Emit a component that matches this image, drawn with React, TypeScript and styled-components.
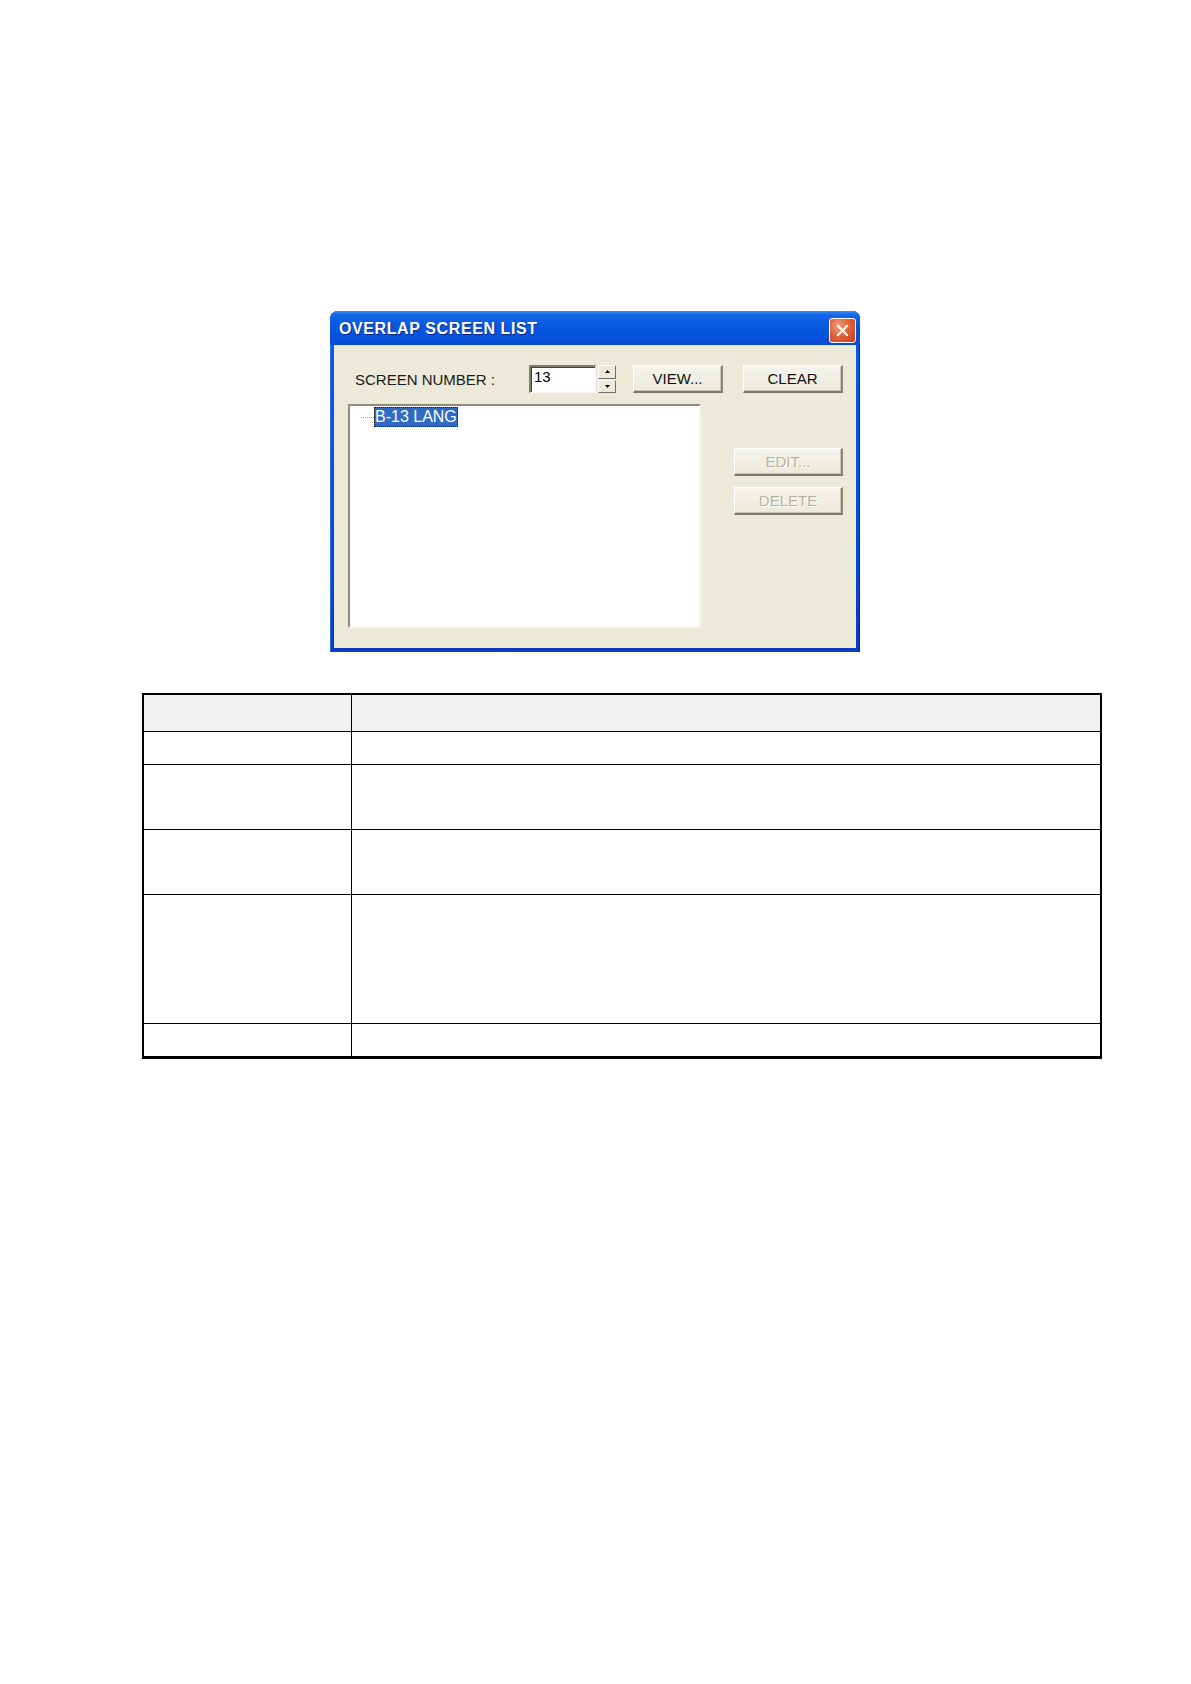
import styled, { createGlobalStyle } from 'styled-components';

const GlobalStyle = createGlobalStyle`
  html, body {
    margin: 0;
    padding: 0;
    background: #ffffff;
  }
  body {
    font-family: 'Liberation Sans', Arial, sans-serif;
    min-height: 1684px;
  }
`;

const rowHeights = [33, 65, 65, 129, 34];

export default function App() {
  return (
    <>
      <GlobalStyle />
      <Page>
        <Window>
          <TitleBar>
            <Title>OVERLAP SCREEN LIST</Title>
            <CloseButton aria-label='close'>
              <svg width='13' height='13' viewBox='0 0 13 13'>
                <path
                  d='M2 2 L11 11 M11 2 L2 11'
                  stroke='#ffffff'
                  strokeWidth='2.2'
                  strokeLinecap='square'
                />
              </svg>
            </CloseButton>
          </TitleBar>
          <Body>
            <TopRow>
              <Label>SCREEN NUMBER :</Label>
              <NumberField>13</NumberField>
              <Spinner>
                <SpinButton>
                  <svg width='5' height='3' viewBox='0 0 5 3'>
                    <path d='M2.5 0 L5 3 L0 3 Z' fill='#000' />
                  </svg>
                </SpinButton>
                <SpinButton>
                  <svg width='5' height='3' viewBox='0 0 5 3'>
                    <path d='M0 0 L5 0 L2.5 3 Z' fill='#000' />
                  </svg>
                </SpinButton>
              </Spinner>
              <Button $width={90} $ml={17}>
                VIEW...
              </Button>
              <Button $width={100} $ml={20}>
                CLEAR
              </Button>
            </TopRow>
            <MainRow>
              <TreeBox>
                <TreeItem>
                  <Branch />
                  <Selected>B-13 LANG</Selected>
                </TreeItem>
              </TreeBox>
              <SideButtons>
                <Button $width={109} disabled>
                  EDIT...
                </Button>
                <Button $width={109} disabled>
                  DELETE
                </Button>
              </SideButtons>
            </MainRow>
          </Body>
        </Window>

        <Table>
          <tbody>
            <HeadRow>
              <Cell $first />
              <Cell />
            </HeadRow>
            {rowHeights.map((h, i) => (
              <tr key={i} style={{ height: h }}>
                <Cell $first />
                <Cell />
              </tr>
            ))}
          </tbody>
        </Table>
      </Page>
    </>
  );
}

const Page = styled.div`
  display: flex;
  flex-direction: column;
  padding-top: 311px;
`;

const Window = styled.div`
  align-self: center;
  margin-left: -1px;
  width: 530px;
  box-sizing: border-box;
  padding: 0 4px 4px 4px;
  border-radius: 8px 8px 0 0;
  background: linear-gradient(
    180deg,
    #0a5ee0 0%,
    #0455e2 40%,
    #0348d4 70%,
    #0a3cc0 100%
  );
  box-shadow: inset 1px 0 0 #2a6ef0, inset -1px 0 0 #002a9c;
`;

const TitleBar = styled.div`
  height: 34px;
  display: flex;
  align-items: center;
  justify-content: space-between;
  background: linear-gradient(
    180deg,
    #3b87f5 0%,
    #1466e8 12%,
    #0758e0 45%,
    #0552dc 70%,
    #0a4ad4 100%
  );
  margin: 0 -4px;
  padding-left: 9px;
  padding-right: 4px;
  border-radius: 8px 8px 0 0;
`;

const Title = styled.span`
  color: #ffffff;
  font-size: 16px;
  font-weight: 600;
  letter-spacing: 0.6px;
  text-shadow: 1px 1px 0 #0a2a8a;
  padding-top: 2px;
`;

const CloseButton = styled.div`
  width: 27px;
  height: 25px;
  box-sizing: border-box;
  margin-top: 4px;
  border: 1px solid #ffffff;
  border-radius: 3px;
  background: radial-gradient(circle at 35% 30%, #f0a080 0%, #e0603a 45%, #c8401a 100%);
  display: flex;
  align-items: center;
  justify-content: center;
`;

const Body = styled.div`
  background: #ece9d8;
  padding: 20px 13px 20px 14px;
`;

const TopRow = styled.div`
  display: flex;
  align-items: center;
  height: 28px;
`;

const Label = styled.span`
  width: 181px;
  padding-left: 7px;
  box-sizing: border-box;
  font-size: 15px;
  color: #1a1a1a;
`;

const NumberField = styled.div`
  width: 67px;
  height: 28px;
  box-sizing: border-box;
  background: #ffffff;
  border-top: 2px solid #7f7d72;
  border-left: 2px solid #7f7d72;
  border-right: 1px solid #f4f3ee;
  border-bottom: 1px solid #f4f3ee;
  box-shadow: inset 1px 1px 0 #404040;
  font-size: 15px;
  line-height: 20px;
  padding-left: 3px;
  color: #000;
`;

const Spinner = styled.div`
  width: 18px;
  height: 28px;
  margin-left: 2px;
  display: flex;
  flex-direction: column;
  gap: 1px;
`;

const SpinButton = styled.div`
  flex: 1;
  box-sizing: border-box;
  background: #ece9d8;
  border-top: 1px solid #ffffff;
  border-left: 1px solid #ffffff;
  border-right: 1px solid #716f64;
  border-bottom: 1px solid #716f64;
  display: flex;
  align-items: center;
  justify-content: center;
`;

const Button = styled.button<{ $width: number; $ml?: number }>`
  width: ${(p) => p.$width}px;
  height: 28px;
  margin-left: ${(p) => p.$ml ?? 0}px;
  box-sizing: border-box;
  padding: 0;
  background: linear-gradient(180deg, #f5f4ee 0%, #ece9d8 100%);
  border-top: 1px solid #ffffff;
  border-left: 1px solid #ffffff;
  border-right: 2px solid #8a8778;
  border-bottom: 2px solid #7a776a;
  box-shadow: inset -1px -1px 0 #c8c5b4;
  font-family: 'Liberation Sans', Arial, sans-serif;
  font-size: 15px;
  color: #111;

  &:disabled {
    color: #b4b1a2;
    text-shadow: 1px 1px 0 #ffffff;
  }
`;

const MainRow = styled.div`
  display: flex;
  margin-top: 11px;
`;

const TreeBox = styled.div`
  width: 353px;
  height: 224px;
  box-sizing: border-box;
  background: #ffffff;
  border-top: 2px solid #8e8c80;
  border-left: 2px solid #8e8c80;
  border-right: 2px solid #f6f5f0;
  border-bottom: 2px solid #f6f5f0;
  padding: 1px 0 0 11px;
`;

const TreeItem = styled.div`
  display: flex;
  align-items: center;
  height: 20px;
`;

const Branch = styled.span`
  width: 13px;
  border-top: 1px dotted #a0a0a0;
`;

const Selected = styled.span`
  background: #316ac5;
  color: #ffffff;
  font-size: 16px;
  line-height: 18px;
  padding: 0 1px;
  outline: 1px dotted #1a1a1a;
  outline-offset: -1px;
  height: 20px;
  display: flex;
  align-items: center;
`;

const SideButtons = styled.div`
  display: flex;
  flex-direction: column;
  gap: 11px;
  margin-left: 33px;
  padding-top: 44px;
`;

const Table = styled.table`
  margin: 41px 0 0 142px;
  width: 960px;
  border-collapse: collapse;
  border: 2px solid #000;
  border-bottom-width: 3px;
  table-layout: fixed;
`;

const HeadRow = styled.tr`
  height: 37px;
  background: #f2f2f2;
`;

const Cell = styled.td<{ $first?: boolean }>`
  width: ${(p) => (p.$first ? '207px' : 'auto')};
  border: 1px solid #000;
  padding: 0;
`;
